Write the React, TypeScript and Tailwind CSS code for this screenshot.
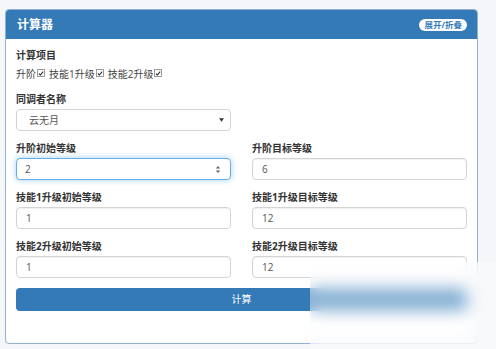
import React from 'react';

const font = { fontFamily: '"Open Sans", "Noto Sans CJK SC", sans-serif' };

function Check() {
  return (
    <span className="inline-flex h-[8px] w-[8px] items-center justify-center border border-[#9a9a9a] bg-white mx-[1px] translate-y-[-1px]">
      <svg viewBox="0 0 8 8" className="h-[7px] w-[7px]">
        <path d="M1.2 4.2 L3.1 6 L6.9 1.6" fill="none" stroke="#222" strokeWidth="1.4" />
      </svg>
    </span>
  );
}

function Label({ children }: { children: React.ReactNode }) {
  return <div className="text-[10px] leading-[14px] font-bold text-[#333]">{children}</div>;
}

function Field({ label, value, focused }: { label: string; value: string; focused?: boolean }) {
  return (
    <div className="mb-[10px]">
      <Label>{label}</Label>
      <div
        className={
          focused
            ? 'mt-[3px] flex h-[22px] items-center justify-between rounded-[4px] border border-[#66afe9] bg-white pl-[8px] pr-[9px] shadow-[0_0_6px_rgba(102,175,233,0.6)]'
            : 'mt-[3px] flex h-[22px] items-center justify-between rounded-[4px] border border-[#d4d4d4] bg-white pl-[9px] pr-[9px] shadow-[inset_0_1px_1px_rgba(0,0,0,0.06)]'
        }
      >
        <span className="text-[10px] text-[#555]">{value}</span>
        {focused && (
          <svg viewBox="0 0 6 10" className="h-[9px] w-[6px]">
            <path d="M0.5 4 L3 1 L5.5 4 Z M0.5 6 L3 9 L5.5 6 Z" fill="#666" />
          </svg>
        )}
      </div>
    </div>
  );
}

export default function App() {
  return (
    <div className="relative h-[349px] w-full overflow-hidden bg-[#f4f6f9] pl-[5px] pt-[9px]" style={font}>
      <div className="h-[335px] w-[473px] overflow-hidden rounded-[4px] border border-[#90b1d2] bg-white">
        <div className="flex h-[29px] items-center justify-between bg-[#337ab7] pl-[11px] pr-[10px]">
          <span className="text-[12px] font-bold text-white">计算器</span>
          <span className="rounded-full bg-white px-[5px] text-[8.5px] leading-[12px] font-bold text-[#337ab7]">
            展开/折叠
          </span>
        </div>
        <div className="px-[10px] pt-[9px]">
          <Label>计算项目</Label>
          <div className="mt-[5px] flex items-center text-[10px] leading-[14px] text-[#444]">
            <span>升阶</span>
            <Check />
            <span className="ml-[3px]">技能1升级</span>
            <Check />
            <span className="ml-[3px]">技能2升级</span>
            <Check />
          </div>
          <div className="mt-[11px] grid grid-cols-2 gap-x-[21px]">
            <div className="mb-[10px]">
              <Label>同调者名称</Label>
              <div className="mt-[3px] flex h-[22px] items-center justify-between rounded-[4px] border border-[#d4d4d4] bg-white pl-[12px] pr-[6px]">
                <span className="text-[10px] text-[#555]">云无月</span>
                <svg viewBox="0 0 6 4" className="h-[4px] w-[5px]">
                  <path d="M0 0 H6 L3 4 Z" fill="#333" />
                </svg>
              </div>
            </div>
            <div />
            <Field label="升阶初始等级" value="2" focused />
            <Field label="升阶目标等级" value="6" />
            <Field label="技能1升级初始等级" value="1" />
            <Field label="技能1升级目标等级" value="12" />
            <Field label="技能2升级初始等级" value="1" />
            <Field label="技能2升级目标等级" value="12" />
          </div>
          <button className="flex h-[23px] w-full items-center justify-center rounded-[4px] bg-[#337ab7] text-[10px] text-white">
            计算
          </button>
        </div>
      </div>
      <div className="absolute left-[310px] top-[262px] right-0 bottom-0 bg-white/40 backdrop-blur-[8px]" />
    </div>
  );
}
